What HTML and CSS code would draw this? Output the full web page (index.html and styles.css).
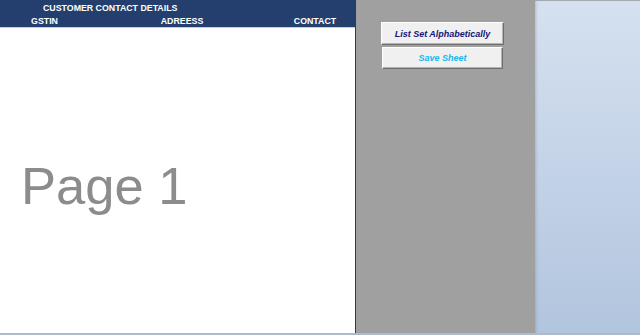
FILE: index.html
```html
<!DOCTYPE html>
<html lang="en">
<head>
    <meta charset="UTF-8">
    <meta name="viewport" content="width=device-width, initial-scale=1.0">
    <title>Customer Contact Details</title>
    <link rel="stylesheet" href="styles.css">
</head>
<body>
    <div class="window">
        <div class="sheet"> <!-- worksheet area -->
            <div class="sheet-head">
                <div class="title">CUSTOMER CONTACT DETAILS</div>
                <div class="cols">
                    <div class="col">GSTIN</div>
                    <div class="col">ADREESS</div>
                    <div class="col">CONTACT</div>
                </div>
            </div>
            <div class="sheet-body">
                <div class="watermark">Page 1</div>
            </div>
        </div>

        <div class="pane"> <!-- grey area with macro buttons -->
            <button class="btn btn-sort">List Set Alphabetically</button>
            <button class="btn btn-save">Save Sheet</button>
        </div>

        <div class="side"></div>
    </div>
    <div class="status"></div>
</body>
</html>
```

FILE: styles.css
```css
/* global */
body {
    margin: 0;
    width: 640px;
    height: 335px;
    overflow: hidden;
    font-family: 'Liberation Sans', Arial, sans-serif;
    display: flex;
    flex-direction: column;
}

.window {
    flex: 1;
    display: flex;
    min-height: 0;
}

/* worksheet */
.sheet {
    width: 355px;
    display: flex;
    flex-direction: column;
    background: #ffffff;
    border-right: 1px solid #2424e6;
}

.sheet-head {
    height: 28px;
    background: #243f6e;
    border-bottom: 1px solid #c9cdd3;
    color: #ffffff;
    font-size: 8.8px;
    font-weight: 700;
    box-sizing: border-box;
    padding-top: 3px;
}

.title {
    padding-left: 43px;
    line-height: 11px;
}

.cols {
    display: grid;
    grid-template-columns: 89px 186px 80px;
    line-height: 12px;
    margin-top: 1px;
}

.col {
    text-align: center;
}

.sheet-body {
    flex: 1;
    display: flex;
    align-items: center;
}

.watermark {
    font-size: 52.5px;
    color: #8c8c8c;
    padding-left: 21px;
    margin-top: 10px;
}

/* grey pane */
.pane {
    width: 179px;
    background: #a0a0a0;
    display: flex;
    flex-direction: column;
    align-items: flex-start;
    padding: 22px 0 0 25px;
    box-sizing: border-box;
    gap: 2px;
}

.btn {
    margin: 0;
    padding: 0;
    background: #f0f0f0;
    border: 1px solid;
    border-color: #ffffff #6e6e6e #6e6e6e #ffffff;
    box-shadow: inset -1px -1px 0 #b4b4b4;
    font-family: 'Liberation Sans', Arial, sans-serif;
    font-size: 9px;
    font-weight: 700;
    font-style: italic;
}

.btn-sort {
    width: 123px;
    height: 23px;
    color: #16167a;
}

.btn-save {
    width: 121px;
    height: 22px;
    margin-left: 1px;
    color: #1ab6ee;
}

/* right panel */
.side {
    flex: 1;
    background: linear-gradient(#d5e1f0, #b2c5de);
    border-top: 1px solid #a3a9b1;
    box-shadow: inset 3px 0 3px -2px rgba(90, 100, 120, 0.3);
}

/* bottom strip */
.status {
    height: 2px;
    background: #b1bacb;
}
```
